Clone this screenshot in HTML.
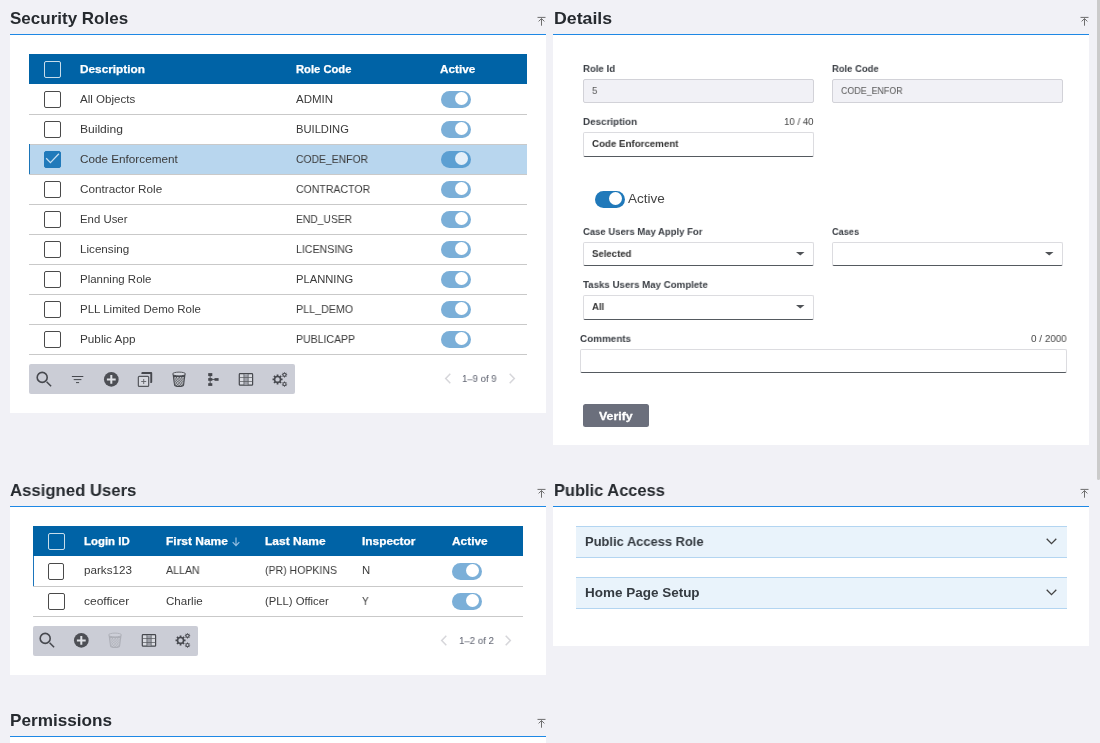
<!DOCTYPE html>
<html lang="en"><head><meta charset="utf-8"><title>Security Roles</title>
<style>
*{box-sizing:border-box;margin:0;padding:0}
html,body{width:1100px;height:743px;overflow:hidden;background:#f1f1f6;font-family:"Liberation Sans",sans-serif;color:#333}
.a{position:absolute}
.t{position:absolute;white-space:nowrap;line-height:1;transform-origin:0 0;will-change:transform}
.h1{font-size:17px;font-weight:bold;color:#262a2f}
.line{position:absolute;height:2px;background:#1e88e5}
.panel{position:absolute;background:#fff}
.th{position:absolute;background:#0063a6}
.tht{font-size:11.2px;font-weight:bold;color:#fff;-webkit-text-stroke:0.25px #fff}
.td{font-size:11.2px;color:#3a3a3a}
.rb{position:absolute;height:1px;background:#c9c9c9}
.cb{position:absolute;width:17px;height:17px;border:1px solid #4a4a4a;border-radius:2px;background:#fff}
.cbh{position:absolute;width:17px;height:17px;border:1px solid rgba(255,255,255,.78);border-radius:2px}
.tg{position:absolute;width:30px;height:17px;border-radius:9px;background:#7bafd8}
.tg i{position:absolute;right:2.7px;top:0.9px;width:13.4px;height:13.4px;border-radius:50%;background:#fff}
.tb{position:absolute;background:#cbcdd6;border-radius:2px}
.lb{font-size:10px;font-weight:bold;color:#3b3f45}
.cnt{font-size:10px;color:#444}
.in{position:absolute;height:24px;border:1px solid #dcdce0;border-radius:2px;background:#fff}
.in.ro{background:#f1f1f6;border-color:#d2d2d8}
.in.ed{height:24.6px;border-bottom:1px solid #555a60}
.iv{font-size:10px;color:#555}
.ivb{font-size:10px;font-weight:bold;color:#333}
.arr{position:absolute;width:0;height:0;margin:0 0 0 .3px;border-left:3.7px solid transparent;border-right:3.7px solid transparent;border-top:3.7px solid #484848}
.acc{position:absolute;background:#e9f3fb;border-top:1px solid #b3d5f1;border-bottom:1px solid #b3d5f1}
.acct{font-size:13px;font-weight:bold;color:#343a40}
.pg{font-size:10px;color:#5a5e6c}
svg{position:absolute;overflow:visible}
</style></head><body>

<span class="t h1" style="left:10px;top:10px;transform:scale(0.9999,1);">Security Roles</span>
<svg style="left:537px;top:16px" width="9" height="10" viewBox="0 0 9 10"><path d="M0.5 1.4H8.5M4.5 2.6V9.7M1.6 5.4L4.5 2.6L7.4 5.4" fill="none" stroke="#666" stroke-width="0.95"/></svg>
<div class="line" style="left:10px;top:34px;width:536px"></div>
<div class="panel" style="left:10px;top:35px;width:536px;height:378px"></div>
<div class="th" style="left:29px;top:54px;width:498px;height:30px"></div>
<div class="cbh" style="left:44px;top:61px"></div>
<span class="t tht" style="left:80.2px;top:64px;transform:scale(1.0545,1);">Description</span>
<span class="t tht" style="left:296.2px;top:64px;transform:scale(1.0013,1);">Role Code</span>
<span class="t tht" style="left:440.4px;top:64px;transform:scale(1.0478,1);">Active</span>
<div class="cb" style="left:44px;top:91px"></div>
<span class="t td" style="left:80.4px;top:94px;transform:scale(1.0324,1);">All Objects</span>
<span class="t td" style="left:296.0px;top:94px;transform:scale(1.0288,1);">ADMIN</span>
<div class="tg" style="left:441px;top:91px;background:#7bafd8"><i style="background:#fff"></i></div>
<div class="rb" style="left:29px;top:114px;width:498px"></div>
<div class="cb" style="left:44px;top:121px"></div>
<span class="t td" style="left:80.4px;top:124px;transform:scale(1.0788,1);">Building</span>
<span class="t td" style="left:296.0px;top:124px;transform:scale(1.0001,1);">BUILDING</span>
<div class="tg" style="left:441px;top:121px;background:#7bafd8"><i style="background:#fff"></i></div>
<div class="rb" style="left:29px;top:144px;width:498px"></div>
<div class="a" style="left:29px;top:145px;width:498px;height:29px;background:#b8d6ee"></div><div class="a" style="left:29px;top:144px;width:1.2px;height:31px;background:#1b75b8"></div>
<div class="cb" style="left:44px;top:151px;background:#217aba;border-color:#217aba"></div>
<svg style="left:44px;top:151px" width="17" height="17" viewBox="0 0 17 17"><path d="M2.2 7.3L6.4 11.6L14.9 2.7" fill="none" stroke="#c9e0f2" stroke-width="1.25"/></svg>
<span class="t td" style="left:80.4px;top:154px;transform:scale(1.0474,1);">Code Enforcement</span>
<span class="t td" style="left:296.0px;top:154px;transform:scale(0.9279,1);">CODE_ENFOR</span>
<div class="tg" style="left:441px;top:151px;background:#5c9fd2"><i style="background:#e4eff9"></i></div>
<div class="rb" style="left:29px;top:174px;width:498px"></div>
<div class="cb" style="left:44px;top:181px"></div>
<span class="t td" style="left:80.4px;top:184px;transform:scale(1.0490,1);">Contractor Role</span>
<span class="t td" style="left:296.0px;top:184px;transform:scale(0.9411,1);">CONTRACTOR</span>
<div class="tg" style="left:441px;top:181px;background:#7bafd8"><i style="background:#fff"></i></div>
<div class="rb" style="left:29px;top:204px;width:498px"></div>
<div class="cb" style="left:44px;top:211px"></div>
<span class="t td" style="left:80.4px;top:214px;transform:scale(1.0174,1);">End User</span>
<span class="t td" style="left:296.0px;top:214px;transform:scale(0.9206,1);">END_USER</span>
<div class="tg" style="left:441px;top:211px;background:#7bafd8"><i style="background:#fff"></i></div>
<div class="rb" style="left:29px;top:234px;width:498px"></div>
<div class="cb" style="left:44px;top:241px"></div>
<span class="t td" style="left:80.4px;top:244px;transform:scale(1.0406,1);">Licensing</span>
<span class="t td" style="left:296.0px;top:244px;transform:scale(0.9467,1);">LICENSING</span>
<div class="tg" style="left:441px;top:241px;background:#7bafd8"><i style="background:#fff"></i></div>
<div class="rb" style="left:29px;top:264px;width:498px"></div>
<div class="cb" style="left:44px;top:271px"></div>
<span class="t td" style="left:80.4px;top:274px;transform:scale(1.0255,1);">Planning Role</span>
<span class="t td" style="left:296.0px;top:274px;transform:scale(0.9938,1);">PLANNING</span>
<div class="tg" style="left:441px;top:271px;background:#7bafd8"><i style="background:#fff"></i></div>
<div class="rb" style="left:29px;top:294px;width:498px"></div>
<div class="cb" style="left:44px;top:301px"></div>
<span class="t td" style="left:80.4px;top:304px;transform:scale(1.0273,1);">PLL Limited Demo Role</span>
<span class="t td" style="left:296.0px;top:304px;transform:scale(0.9564,1);">PLL_DEMO</span>
<div class="tg" style="left:441px;top:301px;background:#7bafd8"><i style="background:#fff"></i></div>
<div class="rb" style="left:29px;top:324px;width:498px"></div>
<div class="cb" style="left:44px;top:331px"></div>
<span class="t td" style="left:80.4px;top:334px;transform:scale(1.0487,1);">Public App</span>
<span class="t td" style="left:296.0px;top:334px;transform:scale(0.9409,1);">PUBLICAPP</span>
<div class="tg" style="left:441px;top:331px;background:#7bafd8"><i style="background:#fff"></i></div>
<div class="rb" style="left:29px;top:354px;width:498px"></div>
<div class="tb" style="left:29px;top:364px;width:266px;height:30px"></div>
<svg style="left:33.50px;top:369.35px" width="20" height="20" viewBox="0 0 20 20"><circle cx="8.2" cy="8.4" r="5" fill="none" stroke="#46484e" stroke-width="1.6"/><path d="M12.6 12.8L17.1 17.3" stroke="#46484e" stroke-width="1.5" fill="none"/></svg>
<svg style="left:67.30px;top:369.00px" width="20" height="20" viewBox="0 0 20 20"><path d="M4.9 7.5H16.3M6.7 10.6H14.4M9 13.6H12.1" stroke="#46484e" stroke-width="1" fill="none"/></svg>
<svg style="left:101.10px;top:369.00px" width="20" height="20" viewBox="0 0 20 20"><circle cx="10.3" cy="10.4" r="7.35" fill="#4d4f55"/><path d="M5.9 10.4H14.7M10.3 6V14.8" stroke="#dfe1e6" stroke-width="2" fill="none"/></svg>
<svg style="left:134.90px;top:369.00px" width="20" height="20" viewBox="0 0 20 20"><path d="M6.4 5V4.1Q6.4 3.1 7.4 3.1H16.2Q17.2 3.1 17.2 4.1V13Q17.2 14 16.2 14H15.3V5Z" fill="#46484e"/><rect x="3.35" y="7.3" width="10.3" height="10" rx="0.9" fill="#d6d8df" stroke="#55575d" stroke-width="1.2"/><path d="M6.2 12.5H11.2M8.7 10V15" stroke="#5f6167" stroke-width="0.9" fill="none"/></svg>
<svg style="left:168.70px;top:369.00px" width="20" height="20" viewBox="0 0 20 20"><defs><pattern id="m178" x="0.35" y="0.2" width="2.6" height="2.6" patternUnits="userSpaceOnUse"><circle cx="0.7" cy="0.7" r="0.74" fill="#e4e6eb"/><circle cx="2" cy="2" r="0.74" fill="#e4e6eb"/></pattern><clipPath id="cm178"><path d="M4.9 8L5.9 15.4Q6.2 16.8 10 16.8Q13.8 16.8 14.1 15.4L15.1 8Z"/></clipPath></defs><path d="M3.6 5.6L5 16Q5.3 18 10.05 18Q14.8 18 15.1 16L16.5 5.6Z" fill="#46484e"/><rect x="4" y="7.9" width="12" height="9.2" fill="url(#m178)" clip-path="url(#cm178)"/><ellipse cx="10.05" cy="5" rx="6.5" ry="1.9" fill="#d6d8df" stroke="#46484e" stroke-width="0.9"/></svg>
<svg style="left:202.50px;top:369.00px" width="20" height="20" viewBox="0 0 20 20"><path d="M7.15 5V15.5M7.15 10.45H13" stroke="#46484e" stroke-width="0.9" fill="none"/><rect x="5.2" y="4.1" width="4.1" height="3" fill="#46484e"/><rect x="5.2" y="9.1" width="4.1" height="2.7" fill="#46484e"/><rect x="5.2" y="14.2" width="4.1" height="2.7" fill="#46484e"/><rect x="11.5" y="9.1" width="4.1" height="2.7" fill="#46484e"/></svg>
<svg style="left:236.30px;top:369.00px" width="20" height="20" viewBox="0 0 20 20"><rect x="3.3" y="4.7" width="13.3" height="11.5" rx="0.8" fill="#d9dbe1" stroke="#46484e" stroke-width="1.2"/><rect x="7.9" y="5.3" width="4.3" height="10.3" fill="#9fa1aa"/><path d="M7.9 4.7V16.2M12.2 4.7V16.2M3.3 8.5H16.6M3.3 12.5H16.6" stroke="#55575c" stroke-width="0.7" fill="none"/></svg>
<svg style="left:270.10px;top:369.00px" width="20" height="20" viewBox="0 0 20 20"><path d="M12.57 9.52L12.57 11.28L11.25 11.29L10.79 12.39L11.72 13.33L10.48 14.57L9.54 13.64L8.44 14.10L8.43 15.42L6.67 15.42L6.66 14.10L5.56 13.64L4.62 14.57L3.38 13.33L4.31 12.39L3.85 11.29L2.53 11.28L2.53 9.52L3.85 9.51L4.31 8.41L3.38 7.47L4.62 6.23L5.56 7.16L6.66 6.70L6.67 5.38L8.43 5.38L8.44 6.70L9.54 7.16L10.48 6.23L11.72 7.47L10.79 8.41L11.25 9.51ZM9.75 10.40A2.2 2.2 0 1 0 5.35 10.40A2.2 2.2 0 1 0 9.75 10.40Z" fill="#46484e" fill-rule="evenodd"/><path d="M17.16 5.34L17.16 6.26L16.35 6.24L16.12 6.79L16.71 7.35L16.05 8.01L15.49 7.42L14.94 7.65L14.96 8.46L14.04 8.46L14.06 7.65L13.51 7.42L12.95 8.01L12.29 7.35L12.88 6.79L12.65 6.24L11.84 6.26L11.84 5.34L12.65 5.36L12.88 4.81L12.29 4.25L12.95 3.59L13.51 4.18L14.06 3.95L14.04 3.14L14.96 3.14L14.94 3.95L15.49 4.18L16.05 3.59L16.71 4.25L16.12 4.81L16.35 5.36ZM15.55 5.80A1.05 1.05 0 1 0 13.45 5.80A1.05 1.05 0 1 0 15.55 5.80Z" fill="#46484e" fill-rule="evenodd"/><path d="M17.16 14.64L17.16 15.56L16.35 15.54L16.12 16.09L16.71 16.65L16.05 17.31L15.49 16.72L14.94 16.95L14.96 17.76L14.04 17.76L14.06 16.95L13.51 16.72L12.95 17.31L12.29 16.65L12.88 16.09L12.65 15.54L11.84 15.56L11.84 14.64L12.65 14.66L12.88 14.11L12.29 13.55L12.95 12.89L13.51 13.48L14.06 13.25L14.04 12.44L14.96 12.44L14.94 13.25L15.49 13.48L16.05 12.89L16.71 13.55L16.12 14.11L16.35 14.66ZM15.55 15.10A1.05 1.05 0 1 0 13.45 15.10A1.05 1.05 0 1 0 15.55 15.10Z" fill="#46484e" fill-rule="evenodd"/></svg>
<span class="t pg" style="left:462.3px;top:375.0px;transform:scale(0.9570,0.875);">1–9 of 9</span>
<svg style="left:444.6px;top:373.3px" width="6" height="11" viewBox="0 0 6 10.4"><path d="M5.3 0.5L0.7 5.2L5.3 9.9" fill="none" stroke="#d6d6da" stroke-width="1.5"/></svg>
<svg style="left:509px;top:373.3px" width="6" height="11" viewBox="0 0 6 10.4"><path d="M0.7 0.5L5.3 5.2L0.7 9.9" fill="none" stroke="#d6d6da" stroke-width="1.5"/></svg>
<span class="t h1" style="left:554px;top:10px;transform:scale(1.0422,1);">Details</span>
<svg style="left:1080px;top:16px" width="9" height="10" viewBox="0 0 9 10"><path d="M0.5 1.4H8.5M4.5 2.6V9.7M1.6 5.4L4.5 2.6L7.4 5.4" fill="none" stroke="#666" stroke-width="0.95"/></svg>
<div class="line" style="left:553px;top:34px;width:536px"></div>
<div class="panel" style="left:553px;top:35px;width:536px;height:410px"></div>
<span class="t lb" style="left:583px;top:65.0px;transform:scale(0.9627,0.875);">Role Id</span>
<span class="t lb" style="left:832px;top:65.0px;transform:scale(0.9423,0.875);">Role Code</span>
<div class="in ro" style="left:583px;top:79px;width:231px"></div>
<div class="in ro" style="left:832px;top:79px;width:231px"></div>
<span class="t iv" style="left:591.7px;top:87.0px;transform:scale(0.9708,0.875);">5</span>
<span class="t iv" style="left:840.7px;top:87.0px;transform:scale(0.8876,0.875);">CODE_ENFOR</span>
<span class="t lb" style="left:583px;top:118.0px;transform:scale(0.9834,0.875);">Description</span>
<span class="t cnt" style="left:783.5px;top:118.0px;transform:scale(0.9642,0.875);">10 / 40</span>
<div class="in ed" style="left:583px;top:132px;width:231px;height:25px"></div>
<span class="t ivb" style="left:591.7px;top:140.0px;transform:scale(0.9718,0.875);">Code Enforcement</span>
<div class="tg" style="left:595px;top:191px;background:#2079ba"><i></i></div>
<span class="t t13" style="left:627.7px;top:192px;transform:scale(1.0422,1);font-size:13px;color:#444;">Active</span>
<span class="t lb" style="left:583px;top:228.0px;transform:scale(0.9488,0.875);">Case Users May Apply For</span>
<span class="t lb" style="left:832px;top:228.0px;transform:scale(0.9196,0.875);">Cases</span>
<div class="in ed" style="left:583px;top:242px;width:231px;height:24px"></div><svg style="left:795.8px;top:251.7px" width="9" height="4" viewBox="0 0 9 4"><path d="M0 0H8.5L4.25 3.4Z" fill="#505357"/></svg>
<div class="in ed" style="left:832px;top:242px;width:231px;height:24px"></div><svg style="left:1044.8px;top:251.7px" width="9" height="4" viewBox="0 0 9 4"><path d="M0 0H8.5L4.25 3.4Z" fill="#505357"/></svg>
<span class="t ivb" style="left:591.7px;top:250.0px;transform:scale(0.9577,0.875);">Selected</span>
<span class="t lb" style="left:583px;top:281.0px;transform:scale(0.9696,0.875);">Tasks Users May Complete</span>
<div class="in ed" style="left:583px;top:295px;width:231px;height:24.6px"></div><svg style="left:795.8px;top:304.7px" width="9" height="4" viewBox="0 0 9 4"><path d="M0 0H8.5L4.25 3.4Z" fill="#505357"/></svg>
<span class="t ivb" style="left:591.7px;top:303.0px;transform:scale(0.9506,0.875);">All</span>
<span class="t lb" style="left:579.5px;top:335.0px;transform:scale(0.9886,0.875);">Comments</span>
<span class="t cnt" style="left:1030.5px;top:335.0px;transform:scale(0.9874,0.875);">0 / 2000</span>
<div class="in ed" style="left:580px;top:349px;width:487px;height:24px"></div>
<div class="a" style="left:583px;top:404px;width:66px;height:23px;background:#6b6f7c;border-radius:2.5px"></div>
<span class="t vf" style="left:599px;top:411px;transform:scale(1.1022,1);font-size:11.2px;font-weight:bold;color:#fff;-webkit-text-stroke:0.3px #fff;">Verify</span>
<span class="t h1" style="left:10px;top:482px;transform:scale(0.9833,1);">Assigned Users</span>
<svg style="left:537px;top:488px" width="9" height="10" viewBox="0 0 9 10"><path d="M0.5 1.4H8.5M4.5 2.6V9.7M1.6 5.4L4.5 2.6L7.4 5.4" fill="none" stroke="#666" stroke-width="0.95"/></svg>
<div class="line" style="left:10px;top:506px;width:536px"></div>
<div class="panel" style="left:10px;top:507px;width:536px;height:168px"></div>
<div class="th" style="left:33px;top:526px;width:490px;height:30px"></div>
<div class="cbh" style="left:48px;top:533px"></div>
<span class="t tht" style="left:84.2px;top:536px;transform:scale(1.0201,1);">Login ID</span>
<span class="t tht" style="left:166.2px;top:536px;transform:scale(1.0704,1);">First Name</span>
<span class="t tht" style="left:264.7px;top:536px;transform:scale(1.0717,1);">Last Name</span>
<span class="t tht" style="left:361.7px;top:536px;transform:scale(1.0604,1);">Inspector</span>
<span class="t tht" style="left:451.7px;top:536px;transform:scale(1.0612,1);">Active</span>
<svg style="left:231.6px;top:537.2px" width="8" height="10" viewBox="0 0 8 10"><path d="M4 0.5V8.4M0.7 5.2L4 8.6L7.3 5.2" fill="none" stroke="#93bde0" stroke-width="1.2"/></svg>
<div class="a" style="left:33px;top:556.0px;width:1px;height:30px;background:#1b75bc"></div>
<div class="cb" style="left:48px;top:563px;width:16px"></div>
<span class="t td" style="left:84.4px;top:565px;transform:scale(1.0417,1);">parks123</span>
<span class="t td" style="left:166.4px;top:565px;transform:scale(0.9506,1);">ALLAN</span>
<span class="t td" style="left:264.9px;top:565px;transform:scale(0.9409,1);">(PR) HOPKINS</span>
<span class="t td" style="left:361.9px;top:565px;transform:scale(1.0131,1);">N</span>
<div class="tg" style="left:452px;top:563px"><i></i></div>
<div class="rb" style="left:33px;top:586px;width:490px"></div>
<div class="cb" style="left:48px;top:593px;width:17px"></div>
<span class="t td" style="left:84.4px;top:596px;transform:scale(1.0738,1);">ceofficer</span>
<span class="t td" style="left:166.4px;top:596px;transform:scale(1.0352,1);">Charlie</span>
<span class="t td" style="left:264.9px;top:596px;transform:scale(1.0076,1);">(PLL) Officer</span>
<span class="t td" style="left:361.9px;top:596px;transform:scale(0.8971,1);">Y</span>
<div class="tg" style="left:452px;top:593px"><i></i></div>
<div class="rb" style="left:33px;top:616px;width:490px"></div>
<div class="tb" style="left:33px;top:626px;width:165px;height:30px"></div>
<svg style="left:37.20px;top:630.10px" width="20" height="20" viewBox="0 0 20 20"><circle cx="8.2" cy="8.4" r="5" fill="none" stroke="#46484e" stroke-width="1.6"/><path d="M12.6 12.8L17.1 17.3" stroke="#46484e" stroke-width="1.5" fill="none"/></svg>
<svg style="left:71.30px;top:630.10px" width="20" height="20" viewBox="0 0 20 20"><circle cx="10.3" cy="10.4" r="7.35" fill="#4d4f55"/><path d="M5.9 10.4H14.7M10.3 6V14.8" stroke="#dfe1e6" stroke-width="2" fill="none"/></svg>
<svg style="left:104.90px;top:630.10px" width="20" height="20" viewBox="0 0 20 20" opacity="0.22"><defs><pattern id="m114" x="0.35" y="0.2" width="2.6" height="2.6" patternUnits="userSpaceOnUse"><circle cx="0.7" cy="0.7" r="0.74" fill="#e4e6eb"/><circle cx="2" cy="2" r="0.74" fill="#e4e6eb"/></pattern><clipPath id="cm114"><path d="M4.9 8L5.9 15.4Q6.2 16.8 10 16.8Q13.8 16.8 14.1 15.4L15.1 8Z"/></clipPath></defs><path d="M3.6 5.6L5 16Q5.3 18 10.05 18Q14.8 18 15.1 16L16.5 5.6Z" fill="#46484e"/><rect x="4" y="7.9" width="12" height="9.2" fill="url(#m114)" clip-path="url(#cm114)"/><ellipse cx="10.05" cy="5" rx="6.5" ry="1.9" fill="#d6d8df" stroke="#46484e" stroke-width="0.9"/></svg>
<svg style="left:138.50px;top:630.10px" width="20" height="20" viewBox="0 0 20 20"><rect x="3.3" y="4.7" width="13.3" height="11.5" rx="0.8" fill="#d9dbe1" stroke="#46484e" stroke-width="1.2"/><rect x="7.9" y="5.3" width="4.3" height="10.3" fill="#9fa1aa"/><path d="M7.9 4.7V16.2M12.2 4.7V16.2M3.3 8.5H16.6M3.3 12.5H16.6" stroke="#55575c" stroke-width="0.7" fill="none"/></svg>
<svg style="left:172.50px;top:630.10px" width="20" height="20" viewBox="0 0 20 20"><path d="M12.57 9.52L12.57 11.28L11.25 11.29L10.79 12.39L11.72 13.33L10.48 14.57L9.54 13.64L8.44 14.10L8.43 15.42L6.67 15.42L6.66 14.10L5.56 13.64L4.62 14.57L3.38 13.33L4.31 12.39L3.85 11.29L2.53 11.28L2.53 9.52L3.85 9.51L4.31 8.41L3.38 7.47L4.62 6.23L5.56 7.16L6.66 6.70L6.67 5.38L8.43 5.38L8.44 6.70L9.54 7.16L10.48 6.23L11.72 7.47L10.79 8.41L11.25 9.51ZM9.75 10.40A2.2 2.2 0 1 0 5.35 10.40A2.2 2.2 0 1 0 9.75 10.40Z" fill="#46484e" fill-rule="evenodd"/><path d="M17.16 5.34L17.16 6.26L16.35 6.24L16.12 6.79L16.71 7.35L16.05 8.01L15.49 7.42L14.94 7.65L14.96 8.46L14.04 8.46L14.06 7.65L13.51 7.42L12.95 8.01L12.29 7.35L12.88 6.79L12.65 6.24L11.84 6.26L11.84 5.34L12.65 5.36L12.88 4.81L12.29 4.25L12.95 3.59L13.51 4.18L14.06 3.95L14.04 3.14L14.96 3.14L14.94 3.95L15.49 4.18L16.05 3.59L16.71 4.25L16.12 4.81L16.35 5.36ZM15.55 5.80A1.05 1.05 0 1 0 13.45 5.80A1.05 1.05 0 1 0 15.55 5.80Z" fill="#46484e" fill-rule="evenodd"/><path d="M17.16 14.64L17.16 15.56L16.35 15.54L16.12 16.09L16.71 16.65L16.05 17.31L15.49 16.72L14.94 16.95L14.96 17.76L14.04 17.76L14.06 16.95L13.51 16.72L12.95 17.31L12.29 16.65L12.88 16.09L12.65 15.54L11.84 15.56L11.84 14.64L12.65 14.66L12.88 14.11L12.29 13.55L12.95 12.89L13.51 13.48L14.06 13.25L14.04 12.44L14.96 12.44L14.94 13.25L15.49 13.48L16.05 12.89L16.71 13.55L16.12 14.11L16.35 14.66ZM15.55 15.10A1.05 1.05 0 1 0 13.45 15.10A1.05 1.05 0 1 0 15.55 15.10Z" fill="#46484e" fill-rule="evenodd"/></svg>
<span class="t pg" style="left:458.9px;top:637.0px;transform:scale(0.9680,0.875);">1–2 of 2</span>
<svg style="left:440.9px;top:635.3px" width="6" height="11" viewBox="0 0 6 10.4"><path d="M5.3 0.5L0.7 5.2L5.3 9.9" fill="none" stroke="#d6d6da" stroke-width="1.5"/></svg>
<svg style="left:505.1px;top:635.3px" width="6" height="11" viewBox="0 0 6 10.4"><path d="M0.7 0.5L5.3 5.2L0.7 9.9" fill="none" stroke="#d6d6da" stroke-width="1.5"/></svg>
<span class="t h1" style="left:554px;top:482px;transform:scale(0.9668,1);">Public Access</span>
<svg style="left:1080px;top:488px" width="9" height="10" viewBox="0 0 9 10"><path d="M0.5 1.4H8.5M4.5 2.6V9.7M1.6 5.4L4.5 2.6L7.4 5.4" fill="none" stroke="#666" stroke-width="0.95"/></svg>
<div class="line" style="left:553px;top:506px;width:536px"></div>
<div class="panel" style="left:553px;top:507px;width:536px;height:139px"></div>
<div class="acc" style="left:576px;top:526px;width:491px;height:32px"></div>
<span class="t acct" style="left:585px;top:535px;transform:scale(0.9927,1);">Public Access Role</span>
<svg style="left:1046px;top:538px" width="11" height="7" viewBox="0 0 11 7"><path d="M0.7 0.8L5.5 5.6L10.3 0.8" fill="none" stroke="#444" stroke-width="1.3"/></svg>
<div class="acc" style="left:576px;top:577px;width:491px;height:32px"></div>
<span class="t acct" style="left:585px;top:586px;transform:scale(1.0368,1);">Home Page Setup</span>
<svg style="left:1046px;top:589px" width="11" height="7" viewBox="0 0 11 7"><path d="M0.7 0.8L5.5 5.6L10.3 0.8" fill="none" stroke="#444" stroke-width="1.3"/></svg>
<span class="t h1" style="left:10px;top:712px;transform:scale(1.0098,1);">Permissions</span>
<svg style="left:537px;top:718px" width="9" height="10" viewBox="0 0 9 10"><path d="M0.5 1.4H8.5M4.5 2.6V9.7M1.6 5.4L4.5 2.6L7.4 5.4" fill="none" stroke="#666" stroke-width="0.95"/></svg>
<div class="line" style="left:10px;top:736px;width:536px"></div>
<div class="panel" style="left:10px;top:737px;width:536px;height:10px"></div>
<div class="a" style="left:1097px;top:0;width:3px;height:480px;background:#cbcbcb;border-radius:0 0 2px 2px"></div>
</body></html>
